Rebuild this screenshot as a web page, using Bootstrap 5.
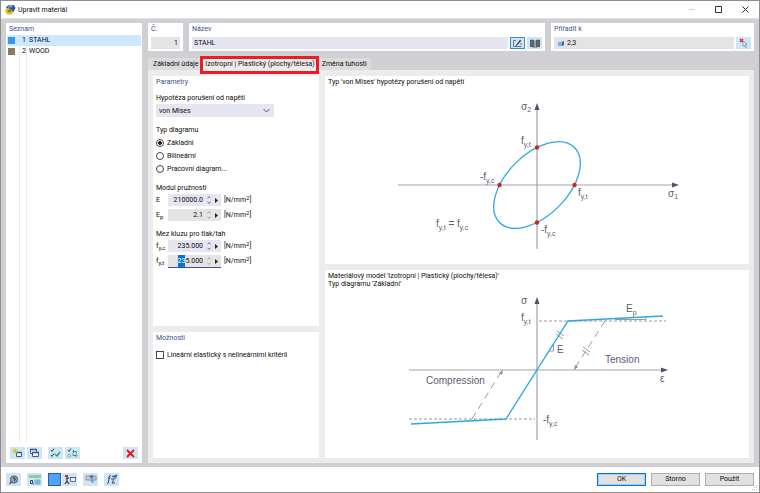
<!DOCTYPE html>
<html lang="cs">
<head>
<meta charset="utf-8">
<meta name="viewport" content="width=device-width, initial-scale=1">
<title>Upravit materiál</title>
<link rel="stylesheet" href="https://cdn.jsdelivr.net/npm/bootstrap@5.3.0/dist/css/bootstrap.min.css">
<style>
body{font:7px/12px Roboto,"Open Sans",sans-serif;color:#0c0c0c;background:#fff}
.dialog{border:1px solid #8e8e90}
.titlebar{height:18px;border-bottom:1px solid #e2e2e4;padding:0 0 0 4px}
.titlebar h1{font-size:7px;line-height:16px;margin-left:2px}
.win-btn{width:27px;height:16px;border:0;background:none;padding:0}
.work{background:#d0cfd4;padding:4px 5px;gap:6px}
.pane{background:#fff}
.cap{color:#3c5288;font-size:7px;line-height:12px;padding:0 3px;margin:0;font-weight:400}
.pane input,.pane select,.pane button{font-size:7px;line-height:12px;color:#0c0c0c;border:0;border-radius:0}
.side{width:136px}
.rows{background:linear-gradient(#ececec,#ececec) 13px 0/1px 100% no-repeat,linear-gradient(#ececec,#ececec) 20px 0/1px 100% no-repeat}
.mat{display:grid;grid-template-columns:13px 6px 1fr;column-gap:1px;height:11px;text-align:left;margin:0 1px;background:none}
.pane .mat{line-height:11px;padding:0 0 0 1px}
.pane .mat.current{background:#cce8ff}
.swatch{width:7px;height:7px;align-self:center}
.steel{background:#3399f0}
.timber{background:#8b7a62}
.strip{gap:2px}
.tool{width:15px;height:13px;background:#cce6f8;padding:0;border:0;display:flex;align-items:center;justify-content:center;flex:none}
.pane .tool{height:12px}
.tool svg{display:block}
.pane .tool.on{border:1px solid #3f8ac4}
.tool.fillsel{width:13px;background:#4da3ff;border:1px solid #2b5f94}
.fld{height:12px;padding:0 2px;min-width:0;background:#e6e6f2}
.fld.ro{background:#e4e4e4}
.boxes{gap:6px}
.num-pane{width:35px}
.assign-pane{width:203px}
.fieldrow{padding:2px 3px;gap:2px}
.tabs{height:12px;margin-top:7px}
.tab{height:12px;line-height:13px;font-size:7px;background:#dcdcdd;border:0;padding:0 4px 0 3px;color:#0c0c0c}
.tab:first-child{padding:0 2px 0 5px}
.tab.active{background:#ececec;padding:0 4px 0 5px}
.tab-mark{position:absolute;inset:-2px 0 -4px;border:3px solid #ed1c24;pointer-events:none}
.sheet{background:#ececec;padding:6px 5px 5px;gap:6px}
.formcol{width:166px;gap:6px}
.opts{height:126px}
.group{padding:0 3px}
.group+.group{margin-top:7px}
.group h3,.group .lab{font-size:7px;line-height:12px;margin:0;font-weight:400;display:block}
.picker{width:118px}
.pane .picker select{width:100%;height:13px;padding:0 3px;background:#e6e6f2;appearance:none}
.picker svg{position:absolute;right:4px;top:4px;pointer-events:none}
.choice{height:13px;display:flex;align-items:center;gap:3px}
.pane .choice input{appearance:none;width:8px;height:8px;margin:0;border:1px solid #444;background:#fff;flex:none}
.pane .choice input[type=radio]{border-radius:50%}
.pane .choice input[type=radio]:checked{background:radial-gradient(circle,#222 0 2px,#fff 2px)}
.qty{display:grid;grid-template-columns:12px 53px auto;height:12px;align-items:center}
.qty+.qty{margin-top:3px}
.spin{background:#e6e6f2;height:12px}
.spin.ro{background:#e4e4e4}
.spin.edit{background:#e4e4e4;box-shadow:0 1px #4a4a9c}
.pane .spin input{background:none;width:37px;padding:0 2px 0 0;text-align:right;outline:0;caret-color:transparent;height:12px}
.spin input::selection{background:#0078d7;color:#fff}
.spin button{background:none;padding:0;width:8px;height:12px;display:flex;align-items:center;justify-content:center}
.qty label sub,.unit sup{font-size:6px}
.unit{padding-left:3px;white-space:nowrap}
.unit sup{top:-2px;line-height:0}
.qty label sub{bottom:-2px;line-height:0}
.charts{gap:6px}
.chart{flex:1 1 0;min-height:0}
.chart p{margin:0;padding:2px 3px 0;line-height:8px}
.chart svg{flex:1 1 0;min-height:0;width:100%}
.chart text{font:10px "Liberation Sans",Arial,sans-serif;fill:#5c5c70}
.chart text .sb{font-size:7px}
.axis{stroke:#a3a3b0;stroke-width:1.2;fill:none}
.tip{fill:#50506a}
.curve{stroke:#2ea6e6;stroke-width:1.3;fill:none}
.hint{stroke:#9a9a9f;stroke-width:1;fill:none}
.foot{height:25px;padding:0 5px;gap:6px}
.foot .strip{gap:1px}
.answers{gap:5px}
.cmd{width:49px;height:13px;font-size:7px;line-height:11px;padding:0;background:#e1e1e1;border:1px solid #adadad;color:#0c0c0c}
.cmd.main{border-color:#0078d7;box-shadow:inset 0 0 0 1px #a5cdf0}
.grip{position:absolute;right:1px;bottom:1px}
</style>
<script src="https://cdn.jsdelivr.net/npm/bootstrap@5.3.0/dist/js/bootstrap.bundle.min.js"></script>
</head>
<body>
<div class="dialog vh-100 d-flex flex-column position-relative">
  <header class="titlebar d-flex align-items-center">
    <svg width="11" height="11" viewBox="0 0 11 11" aria-hidden="true"><path d="M1 3 4 1l5 0 1.500 3-2 4-4 1z" fill="#2f5c8f"/><path d="M4 1h4L7 3 3 4z" fill="#6fa3cf"/><path d="M1 5q2-2 4 0t3 2l-1 3q-3 1-5 0L0 7z" fill="#e3b52c"/><circle cx="4.500" cy="7" r="1.300" fill="#7d6a2a"/></svg>
    <h1 class="mb-0 me-auto fw-normal">Upravit materiál</h1>
    <button class="win-btn" aria-label="Minimalizovat"><svg width="7" height="7"><path d="M.5 3.500h6" stroke="#d0d0d0"/></svg></button>
    <button class="win-btn" aria-label="Maximalizovat"><svg width="7" height="7"><path d="M.5.5h6v6h-6z" fill="none" stroke="#333"/></svg></button>
    <button class="win-btn" aria-label="Zavřít"><svg width="7" height="7"><path d="m.5.5 6 6m0-6-6 6" stroke="#333"/></svg></button>
  </header>

  <main class="work d-flex flex-grow-1">
    <aside class="side pane d-flex flex-column flex-shrink-0">
      <h2 class="cap">Seznam</h2>
      <div class="rows d-flex flex-column flex-grow-1">
        <button class="mat current"><span class="swatch steel"></span><span>1</span><span>STAHL</span></button>
        <button class="mat"><span class="swatch timber"></span><span>2</span><span>WOOD</span></button>
      </div>
      <div class="strip d-flex px-1 pb-1 pt-1">
        <button class="tool" aria-label="Nový"><svg width="11" height="10" viewBox="0 0 11 10"><path d="M4.500 4.500h5v4h-5z" fill="#e8f0fa" stroke="#46587c"/><path d="M4 4.500h6" stroke="#46587c" stroke-width="1.500"/><path d="M3 0v6M0 3h6M1 1l4 4M5 1 1 5" stroke="#d9c21c" stroke-width=".9"/></svg></button>
        <button class="tool" aria-label="Kopírovat"><svg width="11" height="10" viewBox="0 0 11 10"><path d="M1.500 1.500h6v4h-6z" fill="#e8f0fa" stroke="#46587c"/><path d="M3.500 4.500h6v4h-6z" fill="#e8f0fa" stroke="#46587c"/><path d="M1 1.500h7M3 4.500h7" stroke="#46587c" stroke-width="1.500"/></svg></button>
        <button class="tool ms-1" aria-label="Vybrat vše"><svg width="11" height="10" viewBox="0 0 11 10" fill="none"><path d="m1 2 1 1.500L4 .5M1 7l1 1.500L4 5.500" stroke="#444"/><path d="m5 6 2 2 3-4" stroke="#2a9d5c" stroke-width="1.400"/></svg></button>
        <button class="tool" aria-label="Obrátit výběr"><svg width="11" height="10" viewBox="0 0 11 10" fill="none"><path d="m1 2 1 1.500L4 .5" stroke="#444"/><path d="M1 6.500h2.500V9H1z" stroke="#999" stroke-width=".7"/><path d="M6 3.500h3.500v2M9.500 7.500H6v-2M7 2 5.500 3.500 7 5M8.500 6 10 7.500 8.500 9" stroke="#2a9d5c" stroke-width=".9"/></svg></button>
        <button class="tool ms-auto" aria-label="Odstranit"><svg width="9" height="9" viewBox="0 0 9 9"><path d="m1 1 7 7M8 1 1 8" stroke="#e8101c" stroke-width="1.800"/></svg></button>
      </div>
    </aside>

    <section class="d-flex flex-column flex-grow-1">
      <div class="boxes d-flex">
        <div class="pane num-pane">
          <label class="cap d-block" for="no">Č.</label>
          <div class="fieldrow d-flex"><input class="fld ro w-100 text-end" id="no" value="1" readonly></div>
        </div>
        <div class="pane flex-grow-1">
          <label class="cap d-block" for="name">Název</label>
          <div class="fieldrow d-flex">
            <input class="fld flex-grow-1" id="name" value="STAHL">
            <button class="tool on" aria-label="Upravit název"><svg width="11" height="9" viewBox="0 0 11 9" fill="none"><path d="M4 1.500H1.500v6h8" stroke="#66798f"/><path d="m4 7 1-2 3-4 1 .7-3.500 4z" fill="#555" stroke="#444" stroke-width=".6"/><path d="M8 5h2" stroke="#66798f"/></svg></button>
            <button class="tool" aria-label="Knihovna"><svg width="10" height="9" viewBox="0 0 10 9"><path d="M0 1q2.500-1 4.500.5V9Q2.500 7.500 0 8zM10 1q-2.500-1-4.500.5V9Q7.500 7.500 10 8z" fill="#555b63"/><path d="M2 2v5M8 2v5" stroke="#8a9199" stroke-width=".6"/></svg></button>
          </div>
        </div>
        <div class="pane assign-pane">
          <label class="cap d-block" for="assign">Přiřadit k</label>
          <div class="fieldrow d-flex">
            <div class="fld ro d-flex align-items-center flex-grow-1">
              <svg class="flex-shrink-0" width="9" height="7" viewBox="-1 0 9 7"><path d="M1 2 3 1h4L6 2z" fill="#bcd6f5"/><path d="M1 2h4v4H1z" fill="#7fb0ea"/><path d="m5 2 2-1v4L5 6z" fill="#3b62a8"/></svg>
              <input class="fld ro flex-grow-1" id="assign" value="2,3" readonly>
            </div>
            <button class="tool" aria-label="Vybrat objekty"><svg width="9" height="10" viewBox="0 0 9 10"><path d="m1 1 3 3m0-3L1 4" stroke="#e0282c" stroke-width="1.200"/><path d="m4 3 4 3-2 .3 1.500 2.500-1 .6L5 7 4 8z" fill="#f3f6fa" stroke="#6b7684" stroke-width=".7"/></svg></button>
          </div>
        </div>
      </div>

      <nav class="tabs d-flex" role="tablist">
        <button class="tab" role="tab">Základní údaje</button>
        <button class="tab active position-relative" role="tab" aria-selected="true">Izotropní | Plastický (plochy/tělesa)<span class="tab-mark"></span></button>
        <button class="tab" role="tab">Změna tuhosti</button>
      </nav>

      <div class="sheet d-flex flex-grow-1">
        <form class="formcol d-flex flex-column flex-shrink-0">
          <div class="pane flex-grow-1">
            <h2 class="cap">Parametry</h2>
            <div class="group pt-1">
              <label class="lab" for="hyp">Hypotéza porušení od napětí</label>
              <div class="picker position-relative">
                <select id="hyp"><option>von Mises</option></select>
                <svg width="7" height="5" viewBox="0 0 7 5"><path d="m.5 1 3 3 3-3" fill="none" stroke="#555"/></svg>
              </div>
            </div>
            <div class="group" role="radiogroup" aria-labelledby="dt">
              <h3 id="dt">Typ diagramu</h3>
              <label class="choice"><input type="radio" name="d" checked>Základní</label>
              <label class="choice"><input type="radio" name="d">Bilineární</label>
              <label class="choice"><input type="radio" name="d">Pracovní diagram...</label>
            </div>
            <div class="group">
              <h3>Modul pružnosti</h3>
              <div class="qty"><label for="e">E</label><div class="spin d-flex"><input id="e" value="210000.0"><button type="button" aria-label="Krok"><svg width="4" height="8" viewBox="0 0 4 8"><path d="M.5 2 2 .7 3.500 2M.5 6 2 7.300 3.500 6" fill="none" stroke="#444" stroke-width=".8"/></svg></button><button type="button" aria-label="Více"><svg width="4" height="5" viewBox="0 0 4 5"><path d="M0 0v5l3-2.500z" fill="#222"/></svg></button></div><span class="unit">[N/mm<sup>2</sup>]</span></div>
              <div class="qty"><label for="ep">E<sub>p</sub></label><div class="spin ro d-flex"><input id="ep" value="2.1"><button type="button" aria-label="Krok"><svg width="4" height="8" viewBox="0 0 4 8"><path d="M.5 2 2 .7 3.500 2M.5 6 2 7.300 3.500 6" fill="none" stroke="#888" stroke-width=".8"/></svg></button><button type="button" aria-label="Více"><svg width="4" height="5" viewBox="0 0 4 5"><path d="M0 0v5l3-2.500z" fill="#222"/></svg></button></div><span class="unit">[N/mm<sup>2</sup>]</span></div>
            </div>
            <div class="group">
              <h3>Mez kluzu pro tlak/tah</h3>
              <div class="qty"><label for="fc">f<sub>y,c</sub></label><div class="spin d-flex"><input id="fc" value="235.000"><button type="button" aria-label="Krok"><svg width="4" height="8" viewBox="0 0 4 8"><path d="M.5 2 2 .7 3.500 2M.5 6 2 7.300 3.500 6" fill="none" stroke="#444" stroke-width=".8"/></svg></button><button type="button" aria-label="Více"><svg width="4" height="5" viewBox="0 0 4 5"><path d="M0 0v5l3-2.500z" fill="#222"/></svg></button></div><span class="unit">[N/mm<sup>2</sup>]</span></div>
              <div class="qty"><label for="ft">f<sub>y,t</sub></label><div class="spin edit d-flex"><input id="ft" value="235.000"><button type="button" aria-label="Krok"><svg width="4" height="8" viewBox="0 0 4 8"><path d="M.5 2 2 .7 3.500 2M.5 6 2 7.300 3.500 6" fill="none" stroke="#888" stroke-width=".8"/></svg></button><button type="button" aria-label="Více"><svg width="4" height="5" viewBox="0 0 4 5"><path d="M0 0v5l3-2.500z" fill="#222"/></svg></button></div><span class="unit">[N/mm<sup>2</sup>]</span></div>
            </div>
          </div>
          <div class="pane opts">
            <h2 class="cap">Možnosti</h2>
            <div class="group pt-1"><label class="choice"><input type="checkbox">Lineární elastický s nelineárními kritérii</label></div>
          </div>
        </form>

        <div class="charts d-flex flex-column flex-grow-1">
          <div class="chart pane d-flex flex-column">
            <p>Typ 'von Mises' hypotézy porušení od napětí</p>
            <svg viewBox="-150 -99 300 178" role="img" aria-label="Elipsa von Mises">
              <path class="axis" d="M-139 0H136M0 64V-77"/>
              <path class="tip" d="M142 0l-7-2.500v5zM0-82l-2.500 7h5z"/>
              <ellipse class="curve" rx="53" ry="30.600" transform="rotate(-45)"/>
              <g fill="#cc2a0c"><circle cx="-37.500" r="2.200"/><circle cx="37.500" r="2.200"/><circle cy="-37.500" r="2.200"/><circle cy="37.500" r="2.200"/></g>
              <text x="-16" y="-75">σ<tspan class="sb" dy="2">2</tspan></text>
              <text x="131" y="12">σ<tspan class="sb" dy="2">1</tspan></text>
              <text x="-16" y="-41">f<tspan class="sb" dy="3">y,t</tspan></text>
              <text x="41" y="11">f<tspan class="sb" dy="3">y,t</tspan></text>
              <text x="-57" y="-5">-f<tspan class="sb" dy="3">y,c</tspan></text>
              <text x="4" y="48">-f<tspan class="sb" dy="3">y,c</tspan></text>
              <text x="-101" y="42">f<tspan class="sb" dy="3">y,t</tspan><tspan dy="-3"> = f</tspan><tspan class="sb" dy="3">y,c</tspan></text>
            </svg>
          </div>
          <div class="chart pane d-flex flex-column">
            <p>Materiálový model 'Izotropní | Plastický (plochy/tělesa)'<br>Typ diagramu 'Základní'</p>
            <svg viewBox="-150 -82 300 170" role="img" aria-label="Pracovní diagram">
              <path class="axis" d="M-128 0H125M0 70V-68"/>
              <path class="tip" d="M131 0l-7-2.500v5zM0-73l-2.500 7h5z"/>
              <path class="hint" stroke-dasharray="3 2" d="M2-49H129M-128 49H-2"/>
              <path class="hint" stroke-dasharray="7 5" stroke-width="1.300" d="M68-49 38-2M-65 49-36 2"/>
              <path d="M37 0l1-5 3 2zM-34 0l-4 3 3 2z" fill="#8e8e94"/>
              <path class="hint" d="M12-19h4.500v-7M19-36l7 5M20-39l7 5M45-20l7 5M46-23l7 5M78-50.500h31v-3"/>
              <path class="curve" d="M-126 54-31 49 31-49 126-54"/>
              <text x="-16" y="-66">σ</text>
              <text x="-16" y="-49">f<tspan class="sb" dy="3">y,t</tspan></text>
              <text x="89" y="-58">E<tspan class="sb" dy="3">p</tspan></text>
              <text x="20" y="-17">E</text>
              <text x="68" y="-7">Tension</text>
              <text x="-111" y="14">Compression</text>
              <text x="123" y="12">ε</text>
              <text x="6" y="53">-f<tspan class="sb" dy="3">y,c</tspan></text>
            </svg>
          </div>
        </div>
      </div>
    </section>
  </main>

  <footer class="foot d-flex align-items-center">
    <button class="tool" aria-label="Nápověda"><svg width="11" height="10" viewBox="0 0 11 10"><circle cx="6" cy="4.500" r="3.600" fill="#9aa5b0" stroke="#50565e"/><path d="M4 8 1 9.500 2.500 6z" fill="#50565e"/><path d="M5 3.500q1-1.500 2 0T6 5.500" stroke="#222" fill="none"/></svg></button>
    <button class="tool" aria-label="Jednotky"><svg width="12" height="10" viewBox="0 0 12 10"><path d="M0 0h12v3H0z" fill="#86cf9a"/><path d="M1.500 5.500h2v3h-2z" fill="none" stroke="#345" /><path d="M4 9h1" stroke="#345"/><path d="M6 5h5v4H6zM8.500 5v4M6 7h5" fill="#a8cdf5" stroke="#5d9be0" stroke-width=".7"/></svg></button>
    <div class="strip d-flex">
      <button class="tool fillsel" aria-label="Barva"></button>
      <button class="tool" aria-label="Zobrazení"><svg width="12" height="11" viewBox="0 0 12 11"><path d="M1 1h3v2H1z" fill="#d22"/><path d="M2 3h3v2H2z" fill="#33a050"/><path d="M3 4v3L1 10M3 7l2 3" stroke="#333" stroke-width="1.200" fill="none"/><path d="M6.500 3.500h5v4h-5z" fill="#e8f0fa" stroke="#46587c" stroke-width=".8"/><path d="M6 3.500h6" stroke="#46587c"/></svg></button>
    </div>
    <button class="tool" aria-label="Komentář"><svg width="12" height="11" viewBox="0 0 12 11"><path d="M1 2h10v4H8v3L5 6H1z" fill="#c2cdd8" stroke="#7b8a9b" stroke-width=".8"/><path d="m4 2 3-1.500L9 3 6 5z" fill="#5f7ea5"/><circle cx="7" cy="6" r="2" fill="#8fa6c0"/></svg></button>
    <button class="tool" aria-label="Funkce"><svg width="12" height="11" viewBox="0 0 12 11" fill="none" stroke="#34496b"><path d="M5 1.500Q3.500 1 3.200 3L2.500 8q-.3 2-1.500 1.500M2 4h2.500"/><path d="M5 5h3L6 9h3"/><path d="M6 2.500h5M9 1v4M10 2l1-1" stroke="#456a9e" stroke-width="1.300"/></svg></button>
    <div class="answers d-flex ms-auto">
      <button class="cmd main">OK</button>
      <button class="cmd">Storno</button>
      <button class="cmd">Použít</button>
    </div>
    <svg class="grip" width="6" height="6" viewBox="0 0 6 6" fill="#b5b5b5"><path d="M4 0h1v1H4zM2 2h1v1H2zM4 2h1v1H4zM0 4h1v1H0zM2 4h1v1H2zM4 4h1v1H4z"/></svg>
  </footer>
</div>
<script>
const field = document.getElementById('ft');
field.focus();
field.setSelectionRange(0, 2);
</script>
</body>
</html>
